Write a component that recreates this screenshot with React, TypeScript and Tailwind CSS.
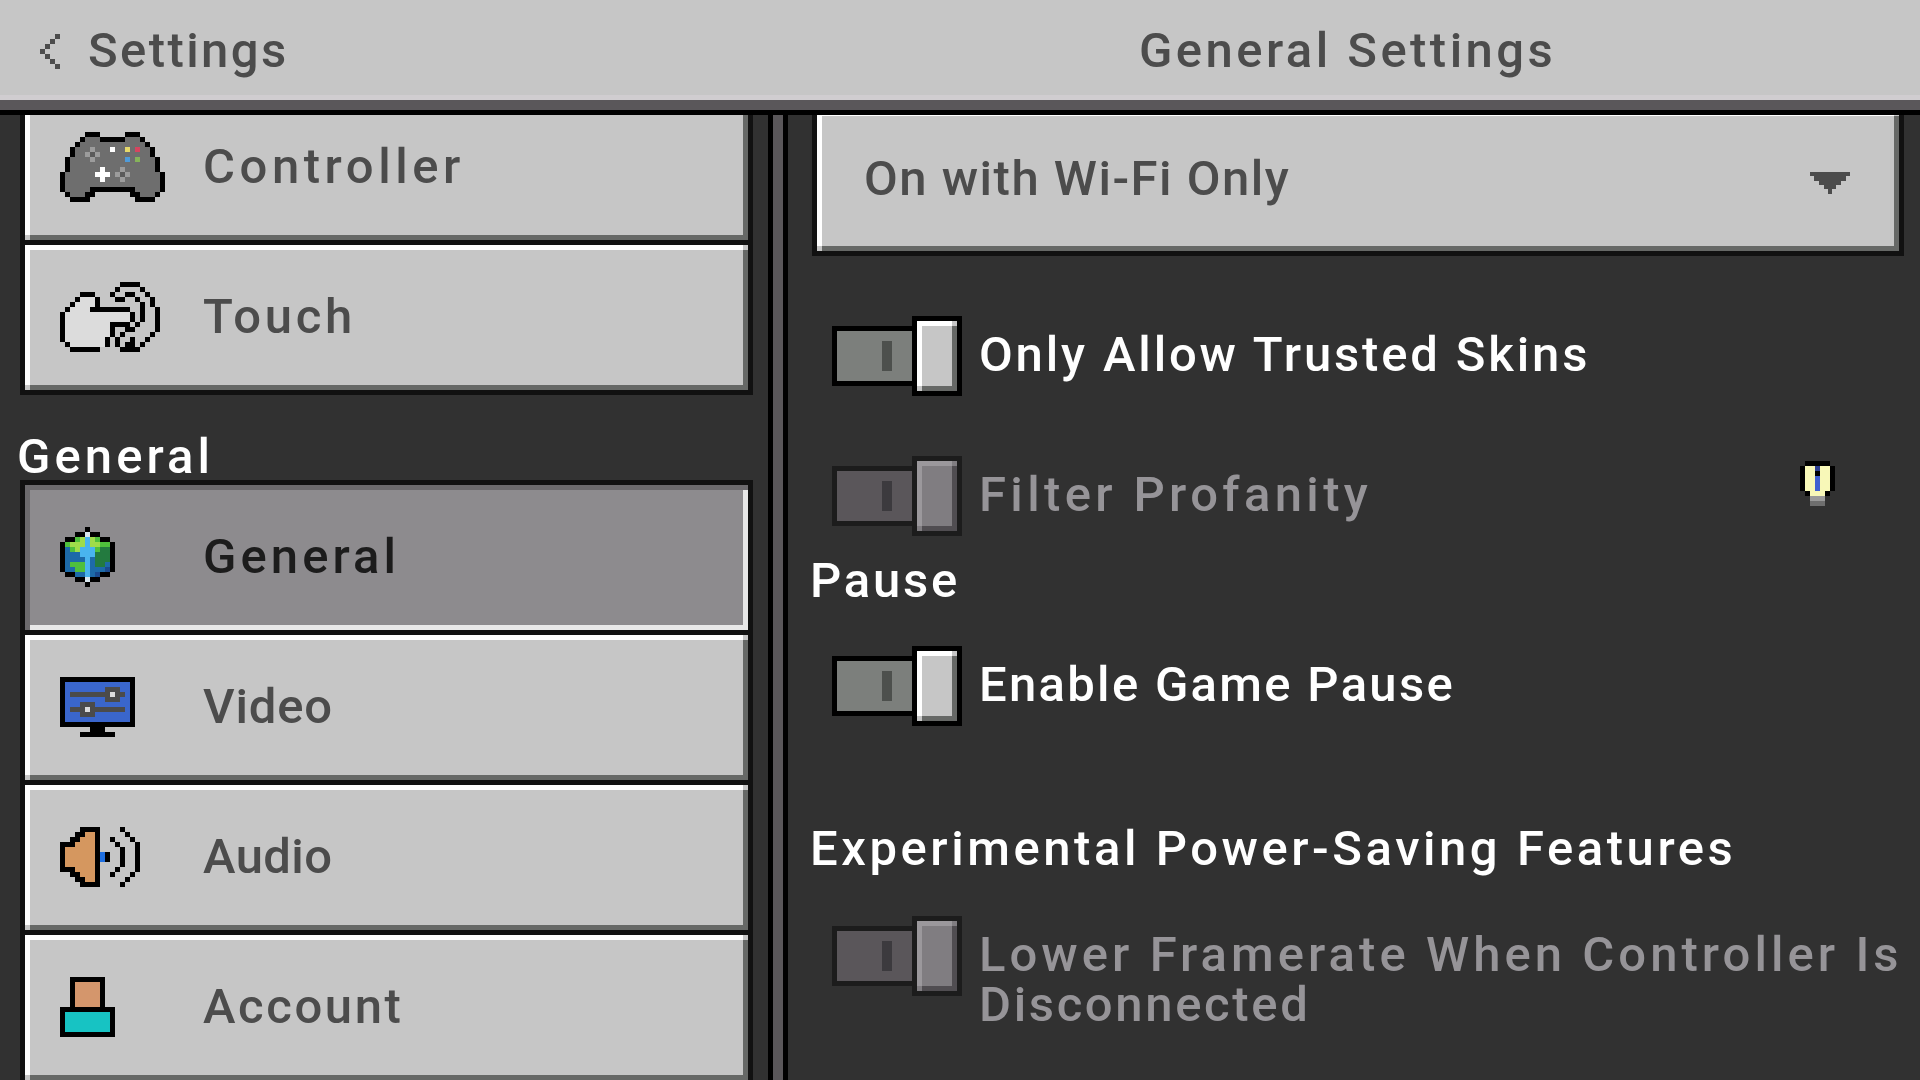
import type { ReactNode } from "react";

// palette for the pixel icons, one char = one 5px block
const PALETTE: Record<string, string> = {
  K: "#000000",
  G: "#6e6e6e",
  L: "#9c9c9c",
  D: "#5a5a5a",
  W: "#ffffff",
  Y: "#e6d96a",
  R: "#d6455f",
  B: "#4f9bd9",
  N: "#86b35a",
};

const GLOBE: Record<string, string> = {
  K: "#000000",
  W: "#d8e6ee",
  L: "#9fdc4a",
  G: "#4fbf3c",
  C: "#49b4ee",
  D: "#237a3f",
  B: "#1d6aa8",
  N: "#1b4a8e",
};

const HAND: Record<string, string> = { K: "#000000", W: "#dcdcdc" };
const MONITOR: Record<string, string> = { K: "#000000", B: "#3a66cc", D: "#4b4b4b", W: "#dcdcdc" };
const SPEAKER: Record<string, string> = { K: "#000000", O: "#d5975f", B: "#1f6fe0" };
const PERSON: Record<string, string> = { K: "#000000", S: "#d4966c", T: "#17c3c3" };
const BULB: Record<string, string> = { K: "#000000", Y: "#f8f8b8", B: "#3f5fd0", D: "#2d3f8f", L: "#9a9a9a", M: "#6e6e6e" };
const CHEVRON: Record<string, string> = { K: "#4c4c4c" };

const controllerRows = [
  "     KKK     KKK",
  "    KGGGKKKKKGGGK",
  "   KGGGGGGGGGGGGGK",
  "  KGGGLGGGWGGYGRGGK",
  "  KGGLDLGGGGGGGGGGK",
  " KGGGGLGGGGGGBGNGGGK",
  " KGGGGGGGGGGGGGGGGGK",
  " KGGGGGGWGGGLGGGGGGK",
  "KGGGGGGWWWGLDLGGGGGGK",
  "KGGGGGGGWGGGLGGGGGGGK",
  "KGGGGGGGGGGGGGGGGGGGK",
  "KGGGGGKKKKKKKKKGGGGGK",
  " KGGGKK       KKGGGK",
  "  KKKK         KKKK",
];

const handRows = [
  "            KKKK",
  "           K    K",
  "    KKK   K  KK  K",
  "   KWWWK   KK  K  K",
  "  KWWWWK        K K",
  " KWWWWKKKKKKKK  K  K",
  "KWWWWWWWWWWWWWK K  K",
  "KWWWWWWWWWWWWWK K  K",
  "KWWWWWWWWWKKKK K   K",
  "KWWWWWWWWWK  KK    K",
  "KWWWWWWWWWK K     K",
  "KWWWWWWWWK K  K  K",
  " KWWWWWWWK K KK K",
  "  KKKKKK    KKKK",
];

const globeRows = [
  "     K",
  "   KKWKK",
  " KKGLCLGKK",
  "KGLLLCLLGGK",
  "KBGLCCCGDDK",
  "KBBBCCCDDDK",
  "KBBBBCBDDDK",
  "KBGGGCBDDBK",
  "KBBGGCBBBNK",
  " KKBBCBNKK",
  "   KKWKK",
  "     K",
];

const monitorRows = [
  "KKKKKKKKKKKKKKK",
  "KBBBBBBBBBBBBBK",
  "KBBBBBBBBDDDBBK",
  "KBDDDDDDDDWDDBK",
  "KBBBBBBBBDDDBBK",
  "KBBBDDDBBBBBBBK",
  "KBDDDWDDDDDDDBK",
  "KBBBDDDBBBBBBBK",
  "KBBBBBBBBBBBBBK",
  "KKKKKKKKKKKKKKK",
  "      KKK",
  "    KKKKKKK",
];

const speakerRows = [
  "    KKKK    K",
  "   KKOOK     K",
  "  KKOOOK  K   K",
  "KKKOOOOK   K   K",
  "KOOOOOOK    K  K",
  "KOOOOOOKBK  K  K",
  "KOOOOOOKBK  K  K",
  "KOOOOOOK    K  K",
  "KKKOOOOK   K   K",
  "  KKOOOK  K   K",
  "   KKOOK     K",
  "    KKKK    K",
];

const personRows = [
  "  KKKKKKK",
  "  KSSSSSK",
  "  KSSSSSK",
  "  KSSSSSK",
  "  KSSSSSK",
  "  KSSSSSK",
  "KKKKKKKKKKK",
  "KTTTTTTTTTK",
  "KTTTTTTTTTK",
  "KTTTTTTTTTK",
  "KTTTTTTTTTK",
  "KKKKKKKKKKK",
];

const bulbRows = [
  " KKKKK",
  "KYYDYYK",
  "KYYKYYK",
  "KYYBYYK",
  "KYYBYYK",
  "KYYBYYK",
  " KYYYK",
  "  LLL",
  "  MMM",
];

const chevronRows = ["   K", "  K", " K", "K", " K", "  K", "   K"];

function Sprite({ rows, colors }: { rows: string[]; colors: Record<string, string> }) {
  const cols = Math.max(...rows.map((r) => r.length));
  return (
    <svg width={cols * 5} height={rows.length * 5} viewBox={`0 0 ${cols} ${rows.length}`} shapeRendering="crispEdges" className="block shrink-0">
      {rows.map((row, y) =>
        row.split("").map((c, x) => (c === " " ? null : <rect key={`${x}-${y}`} x={x} y={y} width="1" height="1" fill={colors[c]} />))
      )}
    </svg>
  );
}

// raised panel with the two odd corners the game draws
function Raised({ className, children }: { className: string; children?: ReactNode }) {
  return (
    <div className={`relative shadow-[inset_5px_5px_0_#ffffff,inset_-5px_-5px_0_#666866] ${className}`}>
      <span className="absolute right-0 top-0 h-[5px] w-[5px] bg-[#c6c6c6]" />
      <span className="absolute bottom-0 left-0 h-[5px] w-[5px] bg-[#c6c6c6]" />
      {children}
    </div>
  );
}

function NavButton({ label, tracking, selected, children }: { label: string; tracking: string; selected?: boolean; children: ReactNode }) {
  const inner = (
    <>
      <div className="flex w-[143px] shrink-0 items-center">{children}</div>
      <span className={`block leading-[50px] ${tracking} ${selected ? "text-[#1c1c1c]" : "text-[#4c4c4c]"}`}>{label}</span>
    </>
  );
  if (selected) {
    return (
      <div className="relative flex h-[145px] items-center bg-[#8d8b8e] pb-[1px] pl-[35px] shadow-[inset_5px_5px_0_#6c6a6d,inset_-5px_-5px_0_#e8e8e8]">
        {inner}
      </div>
    );
  }
  return <Raised className="flex h-[145px] items-center bg-[#c6c6c6] pb-[1px] pl-[35px]">{inner}</Raised>;
}

function Toggle({ disabled }: { disabled?: boolean }) {
  return (
    <div className="ml-[20px] flex shrink-0 items-center">
      <div className={`flex h-[60px] w-[80px] items-center border-y-[5px] border-l-[5px] pl-[45px] ${disabled ? "border-[#1c1c1c] bg-[#5a565a]" : "border-black bg-[#7c7f7c]"}`}>
        <span className={`h-[30px] w-[10px] ${disabled ? "bg-[#3c3a3e]" : "bg-[#4d504d]"}`} />
      </div>
      {disabled ? (
        <div className="relative h-[80px] w-[50px] border-[5px] border-[#1c1c1c] bg-[#807d81] shadow-[inset_5px_5px_0_#9b989c,inset_-5px_-5px_0_#504d51]">
          <span className="absolute right-0 top-0 h-[5px] w-[5px] bg-[#807d81]" />
          <span className="absolute bottom-0 left-0 h-[5px] w-[5px] bg-[#807d81]" />
        </div>
      ) : (
        <div className="h-[80px] w-[50px] border-[5px] border-black bg-black">
          <Raised className="h-[70px] w-[40px] bg-[#c6c6c6]" />
        </div>
      )}
    </div>
  );
}

function ToggleRow({ disabled, children, hint }: { disabled?: boolean; children: ReactNode; hint?: boolean }) {
  return (
    <div className="flex items-start">
      <Toggle disabled={disabled} />
      <div className={`ml-[17px] whitespace-nowrap pt-[14px] leading-[50px] ${disabled ? "text-[#969498]" : "text-white"}`}>{children}</div>
      {hint && (
        <div className="ml-auto mr-[85px] mt-[5px]">
          <Sprite rows={bulbRows} colors={BULB} />
        </div>
      )}
    </div>
  );
}

export default function App() {
  return (
    <div className="flex h-screen flex-col overflow-hidden bg-[#313131] font-['Roboto',sans-serif] text-[49px] font-medium">
      <header className="flex h-[100px] shrink-0 items-center border-b-[5px] border-[#d0cdd0] bg-[#c6c6c6] pt-[7px] text-[#4c4c4c]">
        <div className="flex w-[788px] shrink-0 items-center pl-[40px]">
          <Sprite rows={chevronRows} colors={CHEVRON} />
          <span className="ml-[28px] block leading-[50px] tracking-[2.4px]">Settings</span>
        </div>
        <span className="ml-[351px] block leading-[50px] tracking-[3.45px]">General Settings</span>
      </header>
      <div className="h-[10px] shrink-0 bg-[#5a575a]" />

      <div className="flex min-h-0 flex-1 border-t-[5px] border-black">
        {/* left nav */}
        <aside className="w-[768px] shrink-0 overflow-hidden">
          <div className="-mt-[25px] ml-[20px] flex w-[733px] flex-col gap-[5px] border-[5px] border-[#111111] bg-[#111111]">
            <NavButton label="Controller" tracking="tracking-[4.55px]">
              <Sprite rows={controllerRows} colors={PALETTE} />
            </NavButton>
            <NavButton label="Touch" tracking="tracking-[3.7px]">
              <Sprite rows={handRows} colors={HAND} />
            </NavButton>
          </div>
          <h2 className="mb-[-2px] ml-[17px] mt-[37px] font-medium leading-[50px] tracking-[4.1px] text-white">General</h2>
          <div className="ml-[20px] flex w-[733px] flex-col gap-[5px] border-[5px] border-[#111111] bg-[#111111]">
            <NavButton label="General" tracking="tracking-[4.1px]" selected>
              <Sprite rows={globeRows} colors={GLOBE} />
            </NavButton>
            <NavButton label="Video" tracking="tracking-[0.8px]">
              <Sprite rows={monitorRows} colors={MONITOR} />
            </NavButton>
            <NavButton label="Audio" tracking="tracking-[0.4px]">
              <Sprite rows={speakerRows} colors={SPEAKER} />
            </NavButton>
            <NavButton label="Account" tracking="tracking-[2.6px]">
              <Sprite rows={personRows} colors={PERSON} />
            </NavButton>
          </div>
        </aside>

        <div className="w-[20px] shrink-0 border-x-[5px] border-black bg-[#5a575a]" />

        {/* right panel */}
        <main className="min-w-0 flex-1 overflow-hidden">
          <div className="-mt-[4px] ml-[24px] w-[1092px] border-x-[5px] border-b-[5px] border-[#111111]">
            <Raised className="flex h-[140px] items-center bg-[#c6c6c6] pb-[4px] pl-[47px]">
              <span className="block leading-[50px] tracking-[1.5px] text-[#4c4c4c]">On with Wi-Fi Only</span>
              <svg width="40" height="22" viewBox="0 0 40 22" shapeRendering="crispEdges" className="absolute left-[993px] top-[61px]">
                <path fill="#4c4c4c" d="M0 0h40v4h-4v5h-5v4h-5v4h-4v5h-4v-5h-4v-4H9V9H4V4H0z" />
              </svg>
            </Raised>
          </div>

          <div className="ml-[24px] mt-[60px] flex flex-col">
            <ToggleRow>
              <span className="block tracking-[2.85px]">Only Allow Trusted Skins</span>
            </ToggleRow>
            <div className="mt-[60px]">
              <ToggleRow disabled hint>
                <span className="block tracking-[4.35px]">Filter Profanity</span>
              </ToggleRow>
            </div>
          </div>

          <h2 className="ml-[22px] mt-[20px] font-medium leading-[50px] tracking-[2.8px] text-white">Pause</h2>
          <div className="ml-[24px] mt-[40px]">
            <ToggleRow>
              <span className="block tracking-[2.3px]">Enable Game Pause</span>
            </ToggleRow>
          </div>

          <h2 className="ml-[22px] mt-[98px] font-medium leading-[50px] tracking-[3.55px] text-white">Experimental Power-Saving Features</h2>
          <div className="ml-[24px] mt-[42px]">
            <ToggleRow disabled>
              <span className="block tracking-[4.05px]">Lower Framerate When Controller Is</span>
              <span className="block tracking-[2.65px]">Disconnected</span>
            </ToggleRow>
          </div>
        </main>
      </div>
    </div>
  );
}
